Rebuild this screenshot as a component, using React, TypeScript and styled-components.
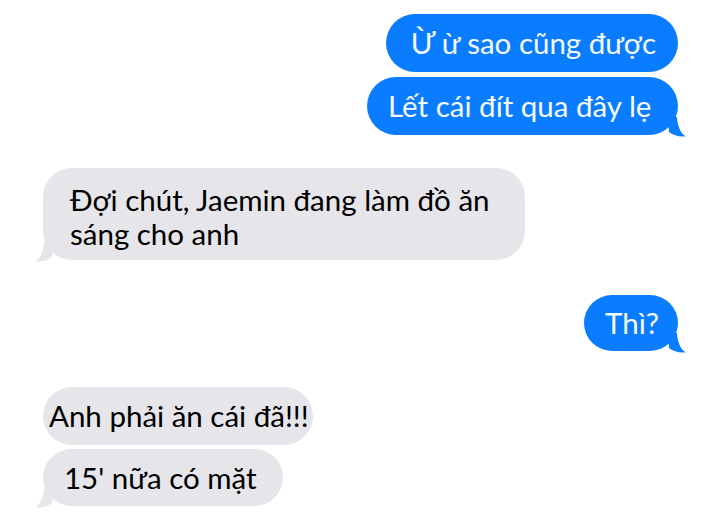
import React from "react";
import styled, { createGlobalStyle, css } from "styled-components";

const GlobalStyle = createGlobalStyle`
  html, body {
    margin: 0;
    padding: 0;
    background: #ffffff;
  }
  body {
    font-family: Lato, "Noto Sans", sans-serif;
  }
`;

type Side = "me" | "them";

interface Message {
  id: number;
  side: Side;
  text: string[];
  tail?: boolean;
  pad?: string;
  gap: number;
}

const messages: Message[] = [
  { id: 1, side: "me", text: ["Ừ ừ sao cũng được"], pad: "12px 22px 12px 25px", gap: 0 },
  { id: 2, side: "me", text: ["Lết cái đít qua đây lẹ "], tail: true, pad: "12px 19px 12px 21px", gap: 5 },
  {
    id: 3,
    side: "them",
    text: ["Đợi chút, Jaemin đang làm đồ ăn", "sáng cho anh"],
    tail: true,
    pad: "15px 35px 9px 27px",
    gap: 33,
  },
  { id: 4, side: "me", text: ["Thì?"], tail: true, pad: "11px 19px 11px 21px", gap: 35 },
  { id: 5, side: "them", text: ["Anh phải ăn cái đã!!!"], pad: "12px 4px 12px 6px", gap: 36 },
  { id: 6, side: "them", text: ["15' nữa có mặt"], tail: true, pad: "12px 26px 11px 21px", gap: 4 },
];

const Thread = styled.div`
  width: 720px;
  height: 527px;
  box-sizing: border-box;
  padding: 14px 42px 0 43px;
  display: flex;
  flex-direction: column;
  overflow: hidden;
`;

const Row = styled.div<{ $side: Side; $gap: number }>`
  display: flex;
  justify-content: ${(p) => (p.$side === "me" ? "flex-end" : "flex-start")};
  margin-top: ${(p) => p.$gap}px;
`;

const Bubble = styled.div<{ $side: Side; $pad: string }>`
  position: relative;
  padding: ${(p) => p.$pad};
  border-radius: 29px;
  font-size: 29.5px;
  line-height: 34px;
  white-space: pre;
  ${(p) =>
    p.$side === "me"
      ? css`
          background: #0a7cff;
          color: #f4faff;
        `
      : css`
          background: #e5e5ea;
          color: #000000;
        `}
`;

const Tail = styled.svg<{ $side: Side }>`
  position: absolute;
  bottom: -2px;
  width: 18px;
  height: 22px;
  ${(p) =>
    p.$side === "me"
      ? css`
          right: -8px;
          fill: #0a7cff;
        `
      : css`
          left: -8px;
          transform: scaleX(-1);
          fill: #e5e5ea;
        `}
`;

const BubbleTail = ({ side }: { side: Side }) => (
  <Tail $side={side} viewBox="0 0 18 22">
    <path d="M0 2 L9 2 C9.5 11 12 17.5 17.5 21.3 C11.5 22 5.5 20.5 1 17 Z" />
  </Tail>
);

const App: React.FC = () => (
  <>
    <GlobalStyle />
    <Thread>
      {messages.map((m) => (
        <Row key={m.id} $side={m.side} $gap={m.gap}>
          <Bubble $side={m.side} $pad={m.pad ?? "12px 22px"}>
            {m.text.join("\n")}
            {m.tail && <BubbleTail side={m.side} />}
          </Bubble>
        </Row>
      ))}
    </Thread>
  </>
);

export default App;
